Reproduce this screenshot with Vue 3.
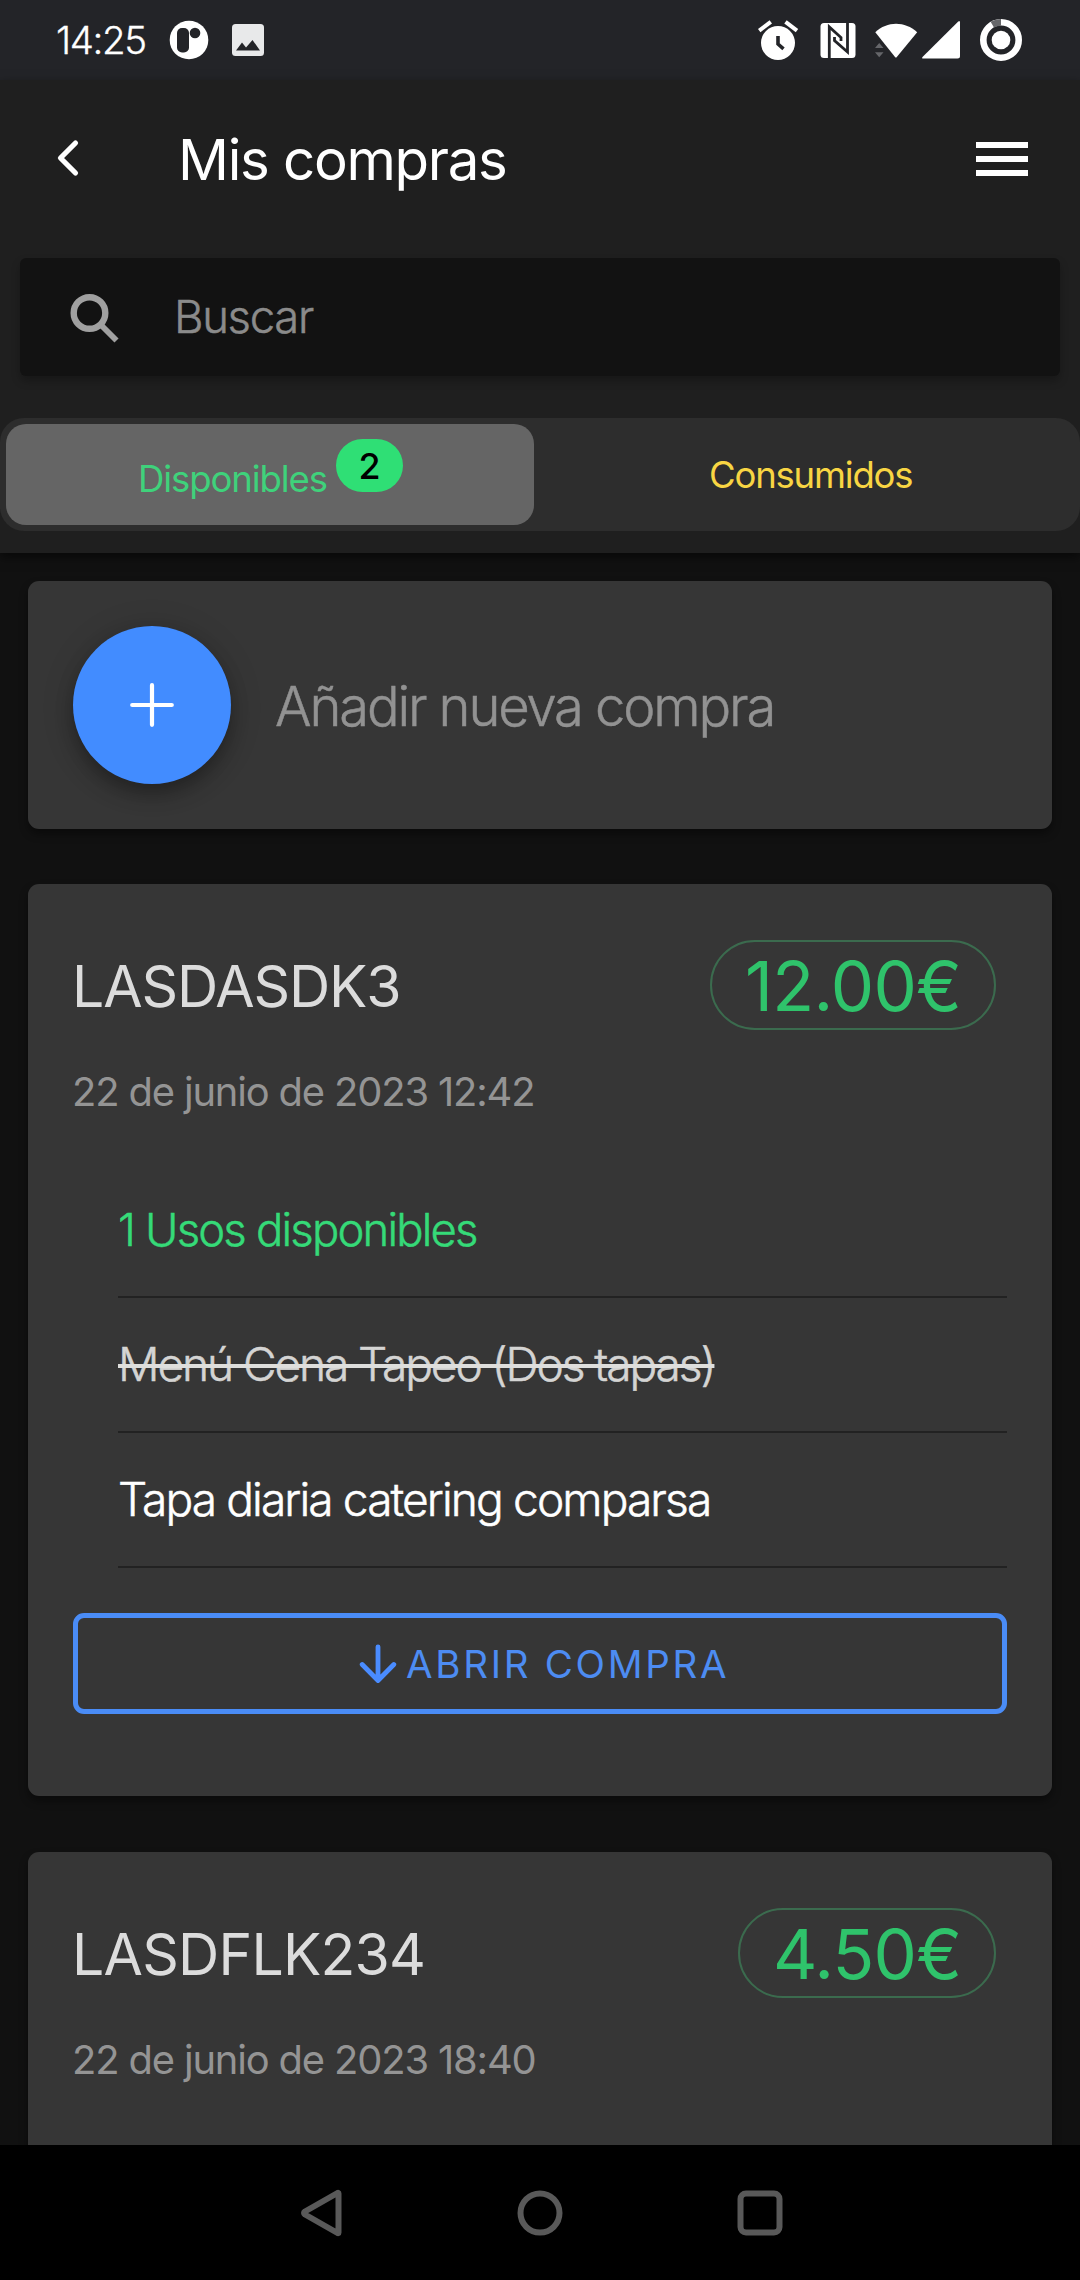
<script setup>
const purchases = [
  {
    code: 'LASDASDK3',
    date: '22 de junio de 2023 12:42',
    price: '12.00€',
    size: 'wide',
    items: [
      { text: '1 Usos disponibles', kind: 'uses' },
      { text: 'Menú Cena Tapeo (Dos tapas)', kind: 'used' },
      { text: 'Tapa diaria catering comparsa', kind: 'free' }
    ]
  },
  {
    code: 'LASDFLK234',
    date: '22 de junio de 2023 18:40',
    price: '4.50€',
    size: 'narrow',
    items: []
  }
]
</script>

<template>
  <div class="screen">
    <div class="status">
      <span class="clock">14:25</span>
      <svg class="app-icon" viewBox="0 0 40 40" width="40" height="40">
        <circle cx="20" cy="20" r="19.3" fill="#fff" />
        <rect x="8" y="8" width="12" height="24.5" rx="5" fill="#232428" />
        <circle cx="26" cy="13" r="5.3" fill="#232428" />
      </svg>
      <svg class="photo-icon" viewBox="0 0 32 32" width="32" height="32">
        <rect width="32" height="32" rx="3.5" fill="#e8e9ea" />
        <path d="M4 26.5 10 18.5 14 23.5 20.5 16 28 26.5z" fill="#232428" />
      </svg>
      <svg class="system-icons" viewBox="0 0 272 50" width="272" height="50">
        <g fill="#fff">
          <circle cx="28" cy="28" r="17" />
          <path d="M9.2 15.600 20.800 6.800" stroke="#fff" stroke-width="4" />
          <path d="M35.500 6.800 47 15.600" stroke="#fff" stroke-width="4" />
          <path d="M28 21v8l5.500 4.800" fill="none" stroke="#232428" stroke-width="3.600" />
          <rect x="70.500" y="8" width="35" height="35" rx="3.500" />
          <path d="M79.300 43V12L91 22.500V26M84.500 22V25.500L97.500 37V8" fill="none" stroke="#232428" stroke-width="2.800" />
          <path d="M125.300 17.200C137 5.800 155 5.800 167.200 17.200L146.800 42q-.9 1-1.800 0z" />
          <path d="M125 33 129.200 28 133.500 33zM125 37.200 129.200 42.200 133.500 37.200z" fill="#65666a" />
          <path d="M172.500 42 208 6.800q2-1.800 2 .8V41q0 2.500-2.500 2.500H173.500q-2.200 0-1-1.500z" />
          <circle cx="251" cy="25" r="9.300" />
        </g>
        <circle cx="251" cy="25" r="17.700" fill="none" stroke="#fff" stroke-width="6.600" />
        <path d="M242.300 9.600A17.700 17.700 0 0 1 251 7.300" fill="none" stroke="#66676a" stroke-width="6.800" />
      </svg>
    </div>

    <header class="header">
      <div class="toolbar">
        <svg class="back" viewBox="0 0 24 40" width="24" height="40">
          <path d="M19.500 5 4.500 20 19.500 35" fill="none" stroke="#fff" stroke-width="5.200" stroke-linecap="round" stroke-linejoin="round" />
        </svg>
        <h1 class="title">Mis compras</h1>
        <div class="menu"><i></i><i></i><i></i></div>
      </div>
      <div class="search">
        <svg class="magnifier" viewBox="0 0 50 50" width="50" height="50">
          <circle cx="19.500" cy="20" r="15.800" fill="none" stroke="#a0a0a0" stroke-width="6.400" />
          <path d="M30 31 46.500 47.500" stroke="#a0a0a0" stroke-width="5.800" />
        </svg>
        <span class="placeholder">Buscar</span>
      </div>
      <div class="segment">
        <div class="tab active">
          <span class="tab-label available">Disponibles</span>
          <span class="badge">2</span>
        </div>
        <div class="tab">
          <span class="tab-label consumed">Consumidos</span>
        </div>
      </div>
    </header>

    <main class="content">
      <section class="card add">
        <div class="fab">
          <svg viewBox="0 0 44 44" width="44" height="44">
            <path d="M22 2.200V41.800M2.200 22H41.800" stroke="#fff" stroke-width="4.200" stroke-linecap="round" />
          </svg>
        </div>
        <span class="add-label">Añadir nueva compra</span>
      </section>

      <section v-for="p in purchases" :key="p.code" class="card purchase">
        <div class="top">
          <h2 class="code" :class="p.size">{{ p.code }}</h2>
          <span class="price" :class="p.size">{{ p.price }}</span>
        </div>
        <p class="date">{{ p.date }}</p>
        <ul class="items">
          <li v-for="item in p.items" :key="item.text" class="item" :class="item.kind">
            <span>{{ item.text }}</span>
          </li>
        </ul>
        <button v-if="p.items.length" class="open">
          <svg class="arrow" viewBox="0 0 38 40" width="38" height="40">
            <path d="M19 2.800V36.500M3.200 20.500 19 36.500 34.800 20.500" fill="none" stroke="#4a8cff" stroke-width="4.800" stroke-linecap="round" stroke-linejoin="round" />
          </svg>
          <span class="open-label">ABRIR COMPRA</span>
        </button>
      </section>
    </main>

    <nav class="nav">
      <svg viewBox="0 0 48 52" width="48" height="52">
        <path d="M42.500 6.500V45.500Q42.500 46.500 41.500 46L9 27.500Q7 26 9 24.500L41.500 6Q42.500 5.500 42.500 6.500z" fill="none" stroke="#595959" stroke-width="6" stroke-linejoin="round" />
      </svg>
      <svg viewBox="0 0 48 52" width="48" height="52">
        <circle cx="24" cy="26" r="19.500" fill="none" stroke="#595959" stroke-width="6" />
      </svg>
      <svg viewBox="0 0 48 52" width="48" height="52">
        <rect x="4.500" y="6.500" width="39" height="39" rx="5.500" fill="none" stroke="#595959" stroke-width="6" />
      </svg>
    </nav>
  </div>
</template>

<style>
body {
  margin: 0;
  background: #000;
}
</style>

<style scoped>
.screen {
  display: flex;
  flex-direction: column;
  width: 1080px;
  height: 2280px;
  overflow: hidden;
  background: #111;
  color: #fff;
  font-family: Inter, "Liberation Sans", sans-serif;
  white-space: nowrap;
}

h1, h2, p, ul {
  margin: 0;
  padding: 0;
  font-weight: 400;
  list-style: none;
}

svg {
  display: block;
  flex: none;
}

.status {
  display: flex;
  align-items: center;
  flex: none;
  box-sizing: border-box;
  height: 80px;
  padding: 0 50px 0 56px;
  background: #232428;
}

.clock {
  width: 113px;
  font-size: 38.5px;
  font-weight: 300;
  letter-spacing: -1.38px;
  -webkit-text-stroke: 0.3px currentColor;
}

.photo-icon {
  margin-left: 23px;
}

.system-icons {
  margin-left: auto;
  margin-right: 8px;
}

.header {
  position: relative;
  flex: none;
  box-sizing: border-box;
  height: 473px;
  background: #1f1f1f;
  box-shadow: 0 4px 10px rgba(0, 0, 0, 0.55);
}

.toolbar {
  display: flex;
  align-items: center;
  height: 159px;
  padding: 0 52px 0 56px;
}

.back {
  margin-bottom: 3px;
}

.title {
  margin-left: 98px;
  font-size: 56.4px;
  line-height: 70px;
  letter-spacing: -1.3px;
}

.menu {
  display: flex;
  flex-direction: column;
  gap: 8px;
  width: 52px;
  margin: 0 0 1px auto;
}

.menu i {
  height: 6px;
  background: #fff;
}

.search {
  display: flex;
  align-items: center;
  height: 118px;
  margin: 19px 20px 0;
  padding-left: 50px;
  border-radius: 6px;
  background: #121212;
  box-shadow: 0 5px 8px rgba(0, 0, 0, 0.25);
}

.magnifier {
  margin-top: 2px;
}

.placeholder {
  margin: 0 0 1px 54px;
  color: #8b8b8b;
  font-size: 45.4px;
  font-weight: 300;
  letter-spacing: -1.3px;
  -webkit-text-stroke: 0.5px currentColor;
}

.segment {
  display: flex;
  box-sizing: border-box;
  height: 113px;
  margin-top: 42px;
  padding: 6px;
  border-radius: 24px;
  background: #2d2d2d;
}

.tab {
  display: flex;
  align-items: center;
  box-sizing: border-box;
  flex: none;
  width: 528px;
  height: 101px;
  padding-left: 175px;
  border-radius: 20px;
}

.tab.active {
  padding-left: 132px;
  background: #656565;
}

.tab-label {
  font-size: 36.5px;
  line-height: 50px;
}

.available {
  width: 198px;
  margin-top: 9px;
  color: #3fd27b;
  letter-spacing: -1.08px;
}

.consumed {
  color: #f8d543;
  letter-spacing: -1.19px;
}

.badge {
  width: 67px;
  height: 53px;
  margin-bottom: 18px;
  border-radius: 27px;
  background: #2fdf75;
  color: #000;
  font-size: 35.8px;
  font-weight: 500;
  line-height: 54px;
  text-align: center;
}

.content {
  display: flex;
  flex-direction: column;
  flex: 1;
  min-height: 0;
  padding: 28px 28px 0;
  overflow: hidden;
}

.card {
  flex: none;
  box-sizing: border-box;
  border-radius: 11px;
  background: #363636;
  box-shadow: 0 5px 8px rgba(0, 0, 0, 0.4);
}

.add {
  display: flex;
  align-items: center;
  height: 248px;
  padding-left: 45px;
}

.fab {
  display: flex;
  align-items: center;
  justify-content: center;
  width: 158px;
  height: 158px;
  border-radius: 50%;
  background: #428cff;
  box-shadow: 0 10px 18px rgba(0, 0, 0, 0.28), 0 3px 34px rgba(0, 0, 0, 0.14);
}

.add-label {
  margin: 1px 0 0 44px;
  color: #929292;
  font-size: 54.3px;
  font-weight: 300;
  letter-spacing: -2.13px;
  -webkit-text-stroke: 0.5px currentColor;
}

.purchase {
  margin-top: 55px;
  height: 912px;
  padding: 56px 45px 0;
}

.purchase + .purchase {
  margin-top: 56px;
}

.top {
  display: flex;
  align-items: center;
  height: 90px;
}

.code {
  margin: 4px 0 0 -1px;
  color: #dcdcdc;
  font-size: 57.1px;
  line-height: 70px;
  letter-spacing: -1.1px;
}

.code.narrow {
  letter-spacing: -0.76px;
}

.price {
  box-sizing: border-box;
  width: 286px;
  height: 90px;
  margin: 0 11px 0 auto;
  padding-left: 33px;
  border: 2px solid #3b6b4e;
  border-radius: 45px;
  color: #2fc36b;
  font-size: 68.8px;
  line-height: 89px;
  letter-spacing: -0.75px;
}

.price.narrow {
  width: 258px;
}

.date {
  margin: 32px 0 41px -1px;
  color: #949494;
  font-size: 39.9px;
  line-height: 60px;
  letter-spacing: -1.15px;
}

.items {
  margin-left: 45px;
}

.item {
  box-sizing: border-box;
  height: 135px;
  border-bottom: 2px solid #222;
  font-size: 46.1px;
  font-weight: 300;
  line-height: 133px;
  letter-spacing: -1.9px;
  -webkit-text-stroke: 0.5px currentColor;
}

.uses {
  color: #35da78;
  font-size: 45.4px;
  letter-spacing: -1.8px;
}

.used {
  color: #d4d4d3;
  letter-spacing: -2.1px;
}

.used span {
  text-decoration: line-through;
  text-decoration-color: #dededc;
  text-decoration-thickness: 4px;
}

.open {
  display: flex;
  align-items: center;
  box-sizing: border-box;
  width: 934px;
  height: 101px;
  margin-top: 45px;
  padding: 0 0 0 281px;
  border: 5px solid #4a8cf6;
  border-radius: 11px;
  background: transparent;
  color: #4d8cf2;
  font-family: inherit;
}

.open-label {
  margin-left: 9px;
  font-size: 38.5px;
  letter-spacing: 2.71px;
}

.nav {
  display: flex;
  align-items: center;
  justify-content: center;
  gap: 172px;
  flex: none;
  height: 135px;
  background: #000;
}
</style>
